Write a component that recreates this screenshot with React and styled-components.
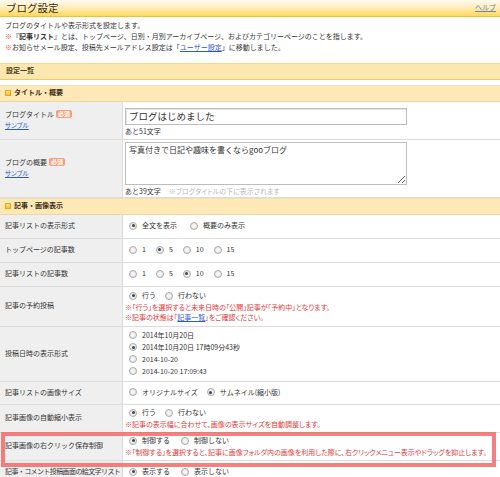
import React from "react";
import styled, { createGlobalStyle } from "styled-components";

const GlobalStyle = createGlobalStyle`
  body {
    margin: 0;
    background: #fff;
    color: #333;
    font-family: "Noto Sans CJK JP", "Noto Sans", sans-serif;
    font-size: 7px;
    line-height: 1.4;
  }
  * {
    box-sizing: border-box;
  }
`;

const Page = styled.div`
  width: 500px;
  overflow: hidden;
`;

const Header = styled.div`
  height: 17px;
  display: flex;
  align-items: center;
  justify-content: space-between;
  padding: 0 4px 0 6px;
  background: linear-gradient(#fffaf0 0%, #ffefbf 45%, #ffd75c 100%);
  border-bottom: 1px solid #f3be37;
`;

const Title = styled.h1`
  margin: 0;
  font-size: 10.5px;
  font-weight: normal;
  color: #3a2c10;
`;

const Link = styled.a`
  color: #2d59c8;
  text-decoration: underline;
`;

const HelpLink = styled(Link)`
  color: #6d82b5;
  font-size: 7px;
`;

const Intro = styled.div`
  padding: 2.5px 5px 0;
  line-height: 11px;
  white-space: nowrap;
`;

const Mark = styled.span`
  color: #e03a3a;
`;

const ListBar = styled.div`
  margin-top: 10px;
  height: 17px;
  display: flex;
  align-items: center;
  padding-left: 6px;
  background: #fde7b0;
  border-top: 1px solid #f9d78a;
  border-bottom: 1px solid #f4c95e;
  font-weight: bold;
  color: #4a3a20;
`;

const Table = styled.div`
  margin-top: 5px;
`;

const Section = styled.div`
  height: 17px;
  display: flex;
  align-items: center;
  gap: 3px;
  padding-left: 5px;
  background: #fde8b6;
  border-top: 1px solid #eedfb8;
  border-bottom: 1px solid #e8d6a6;
  font-weight: bold;
  color: #3d3020;
`;

const SectionIcon = styled.span`
  width: 6px;
  height: 6px;
  background: linear-gradient(#ffe27a, #f7c02a);
  border: 1px solid #e2a920;
`;

const Row = styled.div`
  display: grid;
  grid-template-columns: 123px 1fr;
  height: ${(p) => p.$h}px;
  border-bottom: 1px solid #dcdcdc;
`;

const Label = styled.div`
  background: #efefef;
  border-right: 1px solid #dcdcdc;
  display: flex;
  flex-direction: column;
  justify-content: center;
  padding-left: 5px;
  white-space: nowrap;
  letter-spacing: ${(p) => (p.$tight ? "-0.6px" : "0")};
`;

const LabelLine = styled.div`
  display: flex;
  align-items: center;
  gap: 2px;
`;

const Badge = styled.span`
  background: #f5a07a;
  color: #fff;
  font-size: 6px;
  line-height: 8px;
  padding: 0 2px;
  border-radius: 2px;
  font-weight: bold;
`;

const SampleLink = styled(Link)`
  font-size: 6.5px;
  margin-top: 2px;
  font-feature-settings: "palt";
`;

const Cell = styled.div`
  display: flex;
  flex-direction: column;
  justify-content: ${(p) => (p.$top ? "flex-start" : "center")};
  padding: ${(p) => (p.$top ? "2px" : "0")} 0 0 2px;
  white-space: nowrap;
`;

const TextInput = styled.input`
  width: 282px;
  height: 17px;
  margin: 4px 0 0;
  padding: 0 3px;
  border: 1px solid #bdbdbd;
  box-shadow: inset 1px 1px 1px #e4e4e4;
  font-family: "Noto Sans CJK JP", sans-serif;
  font-size: 9.5px;
  color: #333;
`;

const TextArea = styled.textarea`
  width: 282px;
  height: 43px;
  margin: 0;
  padding: 1px 3px;
  border: 1px solid #bdbdbd;
  font-family: "Noto Sans CJK JP", sans-serif;
  font-size: 8px;
  color: #333;
`;

const Counter = styled.div`
  margin-top: 2px;
  line-height: 9px;
`;

const Hint = styled.span`
  color: #b8b8b8;
  margin-left: 8px;
  font-feature-settings: "palt";
`;

const Options = styled.div`
  display: flex;
  align-items: center;
  gap: ${(p) => p.$gap || 11}px;
  height: 11px;
  padding-left: 4px;
`;

const Stack = styled.div`
  display: flex;
  flex-direction: column;
  padding-left: 4px;
`;

const StackItem = styled.div`
  display: flex;
  align-items: center;
  height: 12px;
`;

const OptionLabel = styled.label`
  display: flex;
  align-items: center;
  gap: 5px;
`;

const Dot = styled.span`
  width: 8px;
  height: 8px;
  border-radius: 50%;
  border: 1px solid #a9a9a9;
  background: radial-gradient(circle, #fafafa 0%, #e2e2e2 100%);
  display: flex;
  align-items: center;
  justify-content: center;
  &::after {
    content: "";
    width: 3px;
    height: 3px;
    border-radius: 50%;
    background: ${(p) => (p.$on ? "#444" : "transparent")};
  }
`;

const Note = styled.div`
  color: #e03a3a;
  line-height: 10px;
  font-feature-settings: "palt";
`;

const Highlight = styled.div`
  position: relative;
`;

const HighlightFrame = styled.div`
  position: absolute;
  left: 1px;
  right: 4px;
  top: -1px;
  bottom: -6px;
  border: 4px solid rgba(244, 96, 96, 0.8);
  pointer-events: none;
`;

const Radio = ({ on, children }) => (
  <OptionLabel>
    <Dot $on={on} />
    {children}
  </OptionLabel>
);

const RadioGroup = ({ items, checked, gap }) => (
  <Options $gap={gap}>
    {items.map((t) => (
      <Radio key={t} on={t === checked}>
        {t}
      </Radio>
    ))}
  </Options>
);

const SimpleRow = ({ label, items, checked, gap, h = 24, tight }) => (
  <Row $h={h}>
    <Label $tight={tight}>{label}</Label>
    <Cell>
      <RadioGroup items={items} checked={checked} gap={gap} />
    </Cell>
  </Row>
);

const dateFormats = [
  "2014年10月20日",
  "2014年10月20日 17時09分43秒",
  "2014-10-20",
  "2014-10-20 17:09:43",
];

export default function App() {
  return (
    <Page>
      <GlobalStyle />
      <Header>
        <Title>ブログ設定</Title>
        <HelpLink href="#">ヘルプ</HelpLink>
      </Header>

      <Intro>
        <div>ブログのタイトルや表示形式を設定します。</div>
        <div>
          <Mark>※</Mark>『<b>記事リスト</b>』とは、トップページ、日別・月別アーカイブページ、およびカテゴリーページのことを指します。
        </div>
        <div>
          <Mark>※</Mark>お知らせメール設定、投稿先メールアドレス設定は「<Link href="#">ユーザー設定</Link>」に移動しました。
        </div>
      </Intro>

      <ListBar>設定一覧</ListBar>

      <Table>
        <Section>
          <SectionIcon />
          タイトル・概要
        </Section>
        <Row $h={38}>
          <Label>
            <LabelLine>
              ブログタイトル <Badge>必須</Badge>
            </LabelLine>
            <SampleLink href="#">サンプル</SampleLink>
          </Label>
          <Cell $top>
            <TextInput readOnly defaultValue="ブログはじめました" />
            <Counter>あと51文字</Counter>
          </Cell>
        </Row>
        <Row $h={58}>
          <Label>
            <LabelLine>
              ブログの概要 <Badge>必須</Badge>
            </LabelLine>
            <SampleLink href="#">サンプル</SampleLink>
          </Label>
          <Cell $top>
            <TextArea readOnly defaultValue="写真付きで日記や趣味を書くならgooブログ" />
            <Counter>
              あと39文字<Hint>※ブログタイトルの下に表示されます</Hint>
            </Counter>
          </Cell>
        </Row>

        <Section>
          <SectionIcon />
          記事・画像表示
        </Section>
        <SimpleRow
          label="記事リストの表示形式"
          items={["全文を表示", "概要のみ表示"]}
          checked="全文を表示"
          gap={13}
        />
        <SimpleRow
          label="トップページの記事数"
          items={["1", "5", "10", "15"]}
          checked="5"
          gap={10}
        />
        <SimpleRow
          label="記事リストの記事数"
          items={["1", "5", "10", "15"]}
          checked="10"
          gap={10}
        />
        <Row $h={40}>
          <Label>記事の予約投稿</Label>
          <Cell>
            <RadioGroup items={["行う", "行わない"]} checked="行う" gap={9} />
            <Note>※「行う」を選択すると未来日時の「公開」記事が「予約中」となります。</Note>
            <Note>
              ※記事の状態は「<Link href="#">記事一覧</Link>」をご確認ください。
            </Note>
          </Cell>
        </Row>
        <Row $h={55}>
          <Label>投稿日時の表示形式</Label>
          <Cell>
            <Stack>
              {dateFormats.map((d) => (
                <StackItem key={d}>
                  <Radio on={d === dateFormats[1]}>{d}</Radio>
                </StackItem>
              ))}
            </Stack>
          </Cell>
        </Row>
        <SimpleRow
          label="記事リストの画像サイズ"
          items={["オリジナルサイズ", "サムネイル(縮小版)"]}
          checked="サムネイル(縮小版)"
          gap={9}
          h={23}
        />
        <Row $h={28}>
          <Label>記事画像の自動縮小表示</Label>
          <Cell>
            <RadioGroup items={["行う", "行わない"]} checked="行う" gap={9} />
            <Note>※記事の表示幅に合わせて、画像の表示サイズを自動調整します。</Note>
          </Cell>
        </Row>
        <Highlight>
          <Row $h={28}>
            <Label>記事画像の右クリック保存制御</Label>
            <Cell>
              <RadioGroup items={["制御する", "制御しない"]} checked="制御する" />
              <Note>
                ※「制御する」を選択すると、記事に画像フォルダ内の画像を利用した際に、右クリックメニュー表示やドラッグを抑止します。
              </Note>
            </Cell>
          </Row>
          <HighlightFrame />
        </Highlight>
        <SimpleRow
          label="記事・コメント投稿画面の絵文字リスト"
          items={["表示する", "表示しない"]}
          checked="表示する"
          tight
        />
      </Table>
    </Page>
  );
}
